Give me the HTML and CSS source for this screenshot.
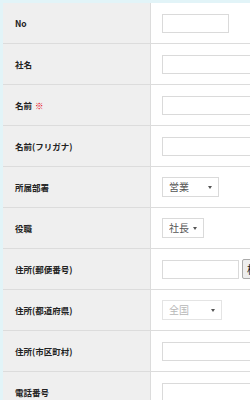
FILE: index.html
```html
<!DOCTYPE html>
<html lang="ja">
<head>
  <meta charset="UTF-8">
  <meta name="viewport" content="width=device-width, initial-scale=1.0">
  <title>会員登録</title>
  <link rel="stylesheet" href="styles.css">
</head>
<body>
  <form class="entry-form">
    <div class="row">
      <div class="label">No</div>
      <div class="field"><input class="text short" type="text"></div>
    </div>
    <div class="row">
      <div class="label">社名</div>
      <div class="field"><input class="text" type="text"></div>
    </div>
    <div class="row">
      <div class="label">名前 <span class="req">※</span></div>
      <div class="field"><input class="text" type="text"></div>
    </div>
    <div class="row">
      <div class="label">名前(フリガナ)</div>
      <div class="field"><input class="text" type="text"></div>
    </div>
    <div class="row">
      <div class="label">所属部署</div>
      <div class="field">
        <span class="select dept"><select><option>営業</option></select></span>
      </div>
    </div>
    <div class="row">
      <div class="label">役職</div>
      <div class="field">
        <span class="select post"><select><option>社長</option></select></span>
      </div>
    </div>
    <div class="row">
      <div class="label">住所(郵便番号)</div>
      <div class="field">
        <input class="text zip" type="text">
        <button class="btn" type="button">検索</button>
      </div>
    </div>
    <div class="row">
      <div class="label">住所(都道府県)</div>
      <div class="field">
        <span class="select pref"><select disabled><option>全国</option></select></span>
      </div>
    </div>
    <div class="row">
      <div class="label">住所(市区町村)</div>
      <div class="field"><input class="text" type="text"></div>
    </div>
    <div class="row">
      <div class="label">電話番号</div>
      <div class="field"><input class="text" type="text"></div>
    </div>
  </form>
</body>
</html>
```

FILE: styles.css
```css
body {
  margin: 0;
  padding: 3px 0 0 3px;
  background: #e2f4f8;
  overflow: hidden;
  font-family: "Noto Sans CJK JP", "Noto Sans", sans-serif;
}
.entry-form {
  width: 420px;
  background: #fff;
}
.row {
  display: flex;
  height: 41px;
  box-sizing: border-box;
  border-bottom: 1px solid #dcdcdc;
}
.label {
  width: 148px;
  box-sizing: border-box;
  border-right: 1px solid #dcdcdc;
  background: #efefef;
  padding-left: 12px;
  display: flex;
  align-items: center;
  font-size: 8.5px;
  font-weight: bold;
  color: #222;
  white-space: nowrap;
}
.req {
  color: #e60012;
  margin-left: 3px;
}
.field {
  flex: 1;
  display: flex;
  align-items: center;
  gap: 3px;
  padding-left: 11px;
}
.text {
  width: 240px;
  height: 19px;
  box-sizing: border-box;
  border: 1px solid #dadada;
  margin: 0;
  padding: 0 4px;
  font-size: 10px;
}
.text.short {
  width: 67px;
}
.text.zip {
  width: 77px;
}
.btn {
  height: 20px;
  margin: 0;
  padding: 0 4px;
  border: 1px solid #aaa;
  border-radius: 2px;
  background: #eee;
  font-family: inherit;
  font-size: 11px;
  color: #222;
}
.select {
  position: relative;
  display: inline-block;
  line-height: 0;
}
.select select {
  appearance: none;
  -webkit-appearance: none;
  height: 20px;
  margin: 0;
  padding: 0 0 1px 6px;
  border: 1px solid #dadada;
  background: #fff;
  font-family: inherit;
  font-size: 10px;
  color: #555;
}
.select::after {
  content: "";
  position: absolute;
  top: 9px;
  right: 7px;
  border-left: 2px solid transparent;
  border-right: 2px solid transparent;
  border-top: 3px solid #555;
  pointer-events: none;
}
.select.dept select {
  width: 57px;
}
.select.post select {
  width: 42px;
}
.select.pref select {
  width: 60px;
  color: #999;
}
```
